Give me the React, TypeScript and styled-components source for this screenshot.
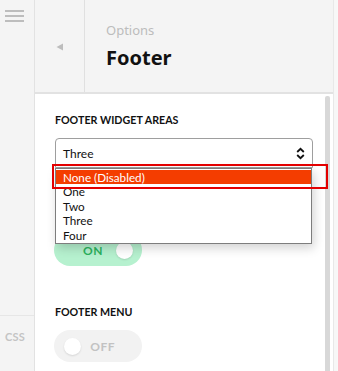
import React from "react";
import styled, { createGlobalStyle } from "styled-components";

const Global = createGlobalStyle`
  html, body { margin: 0; padding: 0; }
  body { font-family: "Lato", "Noto Sans", sans-serif; background: #f7f7f7; }
  * { box-sizing: border-box; }
`;

const Page = styled.div`
  display: flex;
  width: 338px;
  height: 371px;
  overflow: hidden;
  background: #f8f8f8;
`;

const Sidebar = styled.nav`
  width: 35px;
  flex: none;
  background: #f4f4f4;
  border-right: 1px solid #e2e2e2;
  display: flex;
  flex-direction: column;
`;

const Burger = styled.div`
  flex: none;
  padding: 10px 0 0 5px;
  height: 316px;
  border-bottom: 1px solid #e6e6e6;
  display: flex;
  flex-direction: column;
  gap: 3px;
`;

const BurgerLine = styled.span`
  display: block;
  width: 19px;
  height: 2px;
  background: #bdbdbd;
`;

const SideLink = styled.div`
  flex: none;
  font-size: 11px;
  font-weight: 700;
  color: #c4c4c4;
  height: 40px;
  display: flex;
  align-items: center;
  justify-content: center;
  letter-spacing: 0.3px;
  padding-right: 4px;
`;

const Main = styled.div`
  width: 299px;
  flex: none;
  display: flex;
  flex-direction: column;
  border-right: 1px solid #e8e8e8;
`;

const Header = styled.header`
  height: 94px;
  flex: none;
  background: #f4f4f4;
  border-bottom: 2px solid #e2e2e2;
  display: flex;
`;

const BackCol = styled.div`
  width: 50px;
  border-right: 1px solid #e0e0e0;
  display: flex;
  align-items: center;
  justify-content: center;
  padding-top: 1px;
`;

const TitleBox = styled.div`
  padding: 21px 0 0 21px;
  display: flex;
  flex-direction: column;
`;

const Crumb = styled.div`
  font-family: "Noto Sans", sans-serif;
  font-size: 13px;
  color: #bcbcbc;
  line-height: 18px;
`;

const Title = styled.h1`
  margin: 8px 0 0;
  font-family: "Noto Sans", sans-serif;
  font-size: 20px;
  font-weight: 700;
  color: #111;
  line-height: 22px;
`;

const Body = styled.div`
  flex: 1;
  background: #fff;
  display: flex;
  min-height: 0;
`;

const Content = styled.div`
  flex: 1;
  padding: 18px 0 0 20px;
`;

const Track = styled.div`
  width: 5px;
  margin: 2px 3px 0 0;
  background: #d8d8d8;
  border-radius: 2px 2px 0 0;
`;

const Setting = styled.section<{ $gap: number }>`
  margin-bottom: ${(p) => p.$gap}px;
`;

const Label = styled.h3`
  margin: 0 0 10px;
  font-size: 10.7px;
  font-weight: 700;
  color: #111;
  line-height: 16px;
  letter-spacing: 0;
`;

const SelectWrap = styled.div`
  position: relative;
  width: 258px;
`;

const SelectBox = styled.div`
  height: 30px;
  border: 1px solid #9e9e9e;
  border-radius: 4px 4px 0 0;
  display: flex;
  align-items: center;
  justify-content: space-between;
  padding: 0 7px 0 7px;
  font-size: 12px;
  color: #111;
`;

const List = styled.ul`
  position: absolute;
  top: 30px;
  left: 0;
  width: 257px;
  margin: 0;
  padding: 1px 0;
  list-style: none;
  background: #fff;
  border: 1px solid #7d7d7d;
  box-shadow: 2px 4px 10px rgba(0, 0, 0, 0.18);
  z-index: 2;
`;

const Option = styled.li<{ $active?: boolean }>`
  height: 14.4px;
  line-height: 14px;
  padding-left: 7px;
  font-size: 11.7px;
  color: ${(p) => (p.$active ? "#fff" : "#111")};
  background: ${(p) => (p.$active ? "#f43d00" : "transparent")};
`;

const Marker = styled.div`
  position: absolute;
  left: -3px;
  top: 26px;
  width: 276px;
  height: 25px;
  border: 2px solid #e30000;
  z-index: 3;
  pointer-events: none;
`;

const Toggle = styled.div<{ $on?: boolean }>`
  width: 88px;
  height: 32px;
  border-radius: 16px;
  background: ${(p) => (p.$on ? "#b6f1cf" : "#f2f2f2")};
  display: flex;
  align-items: center;
  flex-direction: ${(p) => (p.$on ? "row" : "row-reverse")};
  justify-content: space-between;
  padding: 0 ${(p) => (p.$on ? "9px 0 29px" : "27px 0 10px")};
  margin-left: -1px;
`;

const ToggleText = styled.span<{ $on?: boolean }>`
  font-size: 12px;
  font-weight: 700;
  letter-spacing: 0.5px;
  color: ${(p) => (p.$on ? "#2bb25e" : "#c2c2c2")};
`;

const Knob = styled.span`
  width: 17px;
  height: 17px;
  border-radius: 50%;
  background: #fff;
  box-shadow: 0 1px 2px rgba(0, 0, 0, 0.12);
`;

const Gutter = styled.div`
  width: 3px;
  flex: none;
  background: #f7f7f7;
`;

const options = ["None (Disabled)", "One", "Two", "Three", "Four"];

export default function App() {
  return (
    <>
      <Global />
      <Page>
        <Sidebar>
          <Burger>
            <BurgerLine />
            <BurgerLine />
            <BurgerLine />
          </Burger>
          <SideLink>CSS</SideLink>
          <SideLink>JS</SideLink>
        </Sidebar>
        <Main>
          <Header>
            <BackCol>
              <svg width="8" height="8" viewBox="0 0 8 8">
                <polygon points="7,0.5 7,7.5 0.5,4" fill="#bdbdbd" />
              </svg>
            </BackCol>
            <TitleBox>
              <Crumb>Options</Crumb>
              <Title>Footer</Title>
            </TitleBox>
          </Header>
          <Body>
            <Content>
              <Setting $gap={40}>
                <Label>FOOTER WIDGET AREAS</Label>
                <SelectWrap>
                  <SelectBox>
                    <span>Three</span>
                    <svg width="9" height="13" viewBox="0 0 9 13">
                      <path d="M1.2 5 L4.5 1.8 L7.8 5" fill="none" stroke="#111" strokeWidth="1.8" />
                      <path d="M1.2 8 L4.5 11.2 L7.8 8" fill="none" stroke="#111" strokeWidth="1.8" />
                    </svg>
                  </SelectBox>
                  <List>
                    {options.map((o, i) => (
                      <Option key={o} $active={i === 0}>
                        {o}
                      </Option>
                    ))}
                  </List>
                  <Marker />
                </SelectWrap>
              </Setting>
              <Setting $gap={38}>
                <Label>FOOTER WIDGET LAYOUT</Label>
                <Toggle $on>
                  <ToggleText $on>ON</ToggleText>
                  <Knob />
                </Toggle>
              </Setting>
              <Setting $gap={38}>
                <Label>FOOTER MENU</Label>
                <Toggle>
                  <ToggleText>OFF</ToggleText>
                  <Knob />
                </Toggle>
              </Setting>
            </Content>
            <Track />
          </Body>
        </Main>
        <Gutter />
      </Page>
    </>
  );
}
